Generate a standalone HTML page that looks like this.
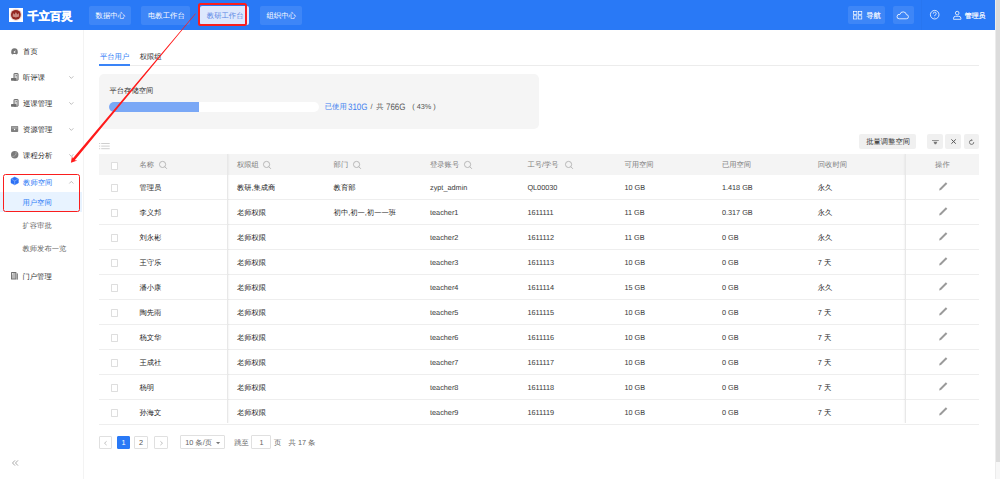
<!DOCTYPE html>
<html><head><meta charset="utf-8"><style>
*{box-sizing:border-box;margin:0;padding:0}
html,body{width:1000px;height:479px;overflow:hidden;background:#fff;font-family:"Liberation Sans",sans-serif;color:#333;text-rendering:geometricPrecision}
.a{position:absolute}
.t{position:absolute;white-space:nowrap;line-height:10px;font-size:7.3px}
.nb{position:absolute;top:5.6px;height:19.4px;background:rgba(255,255,255,0.1);border-radius:2px}
.btn{position:absolute;top:134.2px;height:15.2px;background:#f0f0f0;border-radius:2px}
.cb{position:absolute;width:7.3px;height:7.5px;border:0.9px solid #dedede;background:#fff;border-radius:0.8px}
.pg{position:absolute;top:435.8px;height:13.5px;border:0.8px solid #e0e0e0;border-radius:1px;background:#fff}
svg{position:absolute;overflow:visible}
</style></head><body>
<div class="a" style="left:0px;top:0px;width:995px;height:29.5px;background:#2979f6"></div>
<div class="a" style="left:920.5px;top:0px;width:0.8px;height:29.5px;background:rgba(0,0,0,0.025)"></div>
<div class="a" style="left:995px;top:0px;width:5px;height:479px;background:#f7f7f7"></div>
<div class="a" style="left:995.8px;top:0px;width:4.2px;height:462.4px;background:#dcdcdc"></div>
<div class="a" style="left:995px;top:0px;width:0.9px;height:479px;background:#ececec"></div>
<div class="a" style="left:9.1px;top:7.9px;width:14px;height:14px;background:#fff"></div>
<svg style="left:9.1px;top:7.9px" width="14" height="14" viewBox="0 0 14 14"><circle cx="6.9" cy="6.8" r="6.0" fill="#ecd3d0"/><circle cx="6.9" cy="6.8" r="4.9" fill="#922621"/><path d="M3.6 8.6 L4.0 5.0 L5.5 6.4 L6.9 3.9 L8.3 6.4 L9.8 5.0 L10.2 8.6 Q6.9 10.2 3.6 8.6 Z" fill="#c98a83"/></svg>
<div class="t" style="left:27.4px;top:12.00px;color:#fff;font-size:11.3px;font-weight:bold;-webkit-text-stroke:0.35px #fff">千立百灵</div>
<div class="nb" style="left:89px;width:42px"></div>
<div class="t" style="left:95.6px;top:11.00px;color:#fff;font-size:7.35px;">数据中心</div>
<div class="nb" style="left:141px;width:49px"></div>
<div class="t" style="left:148px;top:11.00px;color:#fff;font-size:7.35px;">电教工作台</div>
<div class="nb" style="left:200px;width:49.4px;background:#dde8fd"></div>
<div class="t" style="left:206.8px;top:11.00px;color:#5a86e4;font-size:7.35px;">教研工作台</div>
<div class="nb" style="left:260.2px;width:41.4px"></div>
<div class="t" style="left:266.5px;top:11.00px;color:#fff;font-size:7.35px;">组织中心</div>
<div class="a" style="left:198.3px;top:3.1px;width:48.5px;height:22.8px;border:2px solid #fa1e1e;border-radius:2.5px"></div>
<div class="nb" style="left:848px;top:6px;height:18px;width:37px"></div>
<svg style="left:852.8px;top:10.8px" width="9.2" height="8.4" viewBox="0 0 9.2 8.4"><g fill="none" stroke="#fff" stroke-width="0.7"><rect x="0.4" y="0.4" width="3.5" height="3.2"/><rect x="5.3" y="0.4" width="3.5" height="3.2"/><rect x="0.4" y="4.8" width="3.5" height="3.2"/><rect x="5.3" y="4.8" width="3.5" height="3.2"/></g></svg>
<div class="t" style="left:866.2px;top:10.60px;color:#fff;font-size:7.3px;-webkit-text-stroke:0.15px #fff">导航</div>
<div class="nb" style="left:893px;top:6px;height:18px;width:20.6px"></div>
<svg style="left:897.2px;top:11px" width="12" height="8.2" viewBox="0 0 12 8.2"><path d="M2.3 7.8 H9.4 A2.05 2.05 0 1 0 9.4 3.7 A3.3 3.3 0 0 0 2.9 3.5 A2.2 2.2 0 1 0 2.3 7.8 Z" fill="none" stroke="#fff" stroke-width="0.8"/></svg>
<svg style="left:929.8px;top:10.4px" width="9.4" height="9.4" viewBox="0 0 9.4 9.4"><circle cx="4.7" cy="4.7" r="4.3" fill="none" stroke="#fff" stroke-width="0.8"/><path d="M3.3 3.7 A1.45 1.45 0 1 1 5.2 5.0 Q4.7 5.3 4.7 6.0" fill="none" stroke="#fff" stroke-width="0.8"/><circle cx="4.7" cy="7.1" r="0.45" fill="#fff"/></svg>
<svg style="left:953px;top:11px" width="8.4" height="8.8" viewBox="0 0 8.4 8.8"><circle cx="4.2" cy="2.1" r="1.8" fill="none" stroke="#fff" stroke-width="0.8"/><path d="M0.5 8.3 V7.3 Q0.5 5.3 2.6 5.3 H5.8 Q7.9 5.3 7.9 7.3 V8.3 Z" fill="none" stroke="#fff" stroke-width="0.8"/></svg>
<div class="t" style="left:964.8px;top:11.70px;color:#fff;font-size:6.9px;-webkit-text-stroke:0.2px #fff">管理员</div>
<div class="a" style="left:82.8px;top:29.5px;width:0.8px;height:449.5px;background:#f3f3f3"></div>
<div class="a" style="left:0px;top:191.5px;width:82.3px;height:20.8px;background:#e8f3ff"></div>
<div class="t" style="left:23.1px;top:46.90px;color:#262626;font-size:7.3px;">首页</div>
<div class="t" style="left:23.1px;top:72.90px;color:#262626;font-size:7.3px;">听评课</div>
<svg style="left:69.3px;top:76.0px" width="4.7" height="2.8" viewBox="0 0 4.7 2.8"><path d="M0.3 0.3 L2.35 2.4 L4.4 0.3" fill="none" stroke="#a4a4a4" stroke-width="0.7"/></svg>
<div class="t" style="left:23.1px;top:99.00px;color:#262626;font-size:7.3px;">巡课管理</div>
<svg style="left:69.3px;top:102.1px" width="4.7" height="2.8" viewBox="0 0 4.7 2.8"><path d="M0.3 0.3 L2.35 2.4 L4.4 0.3" fill="none" stroke="#a4a4a4" stroke-width="0.7"/></svg>
<div class="t" style="left:23.1px;top:124.90px;color:#262626;font-size:7.3px;">资源管理</div>
<svg style="left:69.3px;top:128.0px" width="4.7" height="2.8" viewBox="0 0 4.7 2.8"><path d="M0.3 0.3 L2.35 2.4 L4.4 0.3" fill="none" stroke="#a4a4a4" stroke-width="0.7"/></svg>
<div class="t" style="left:23.1px;top:150.90px;color:#262626;font-size:7.3px;">课程分析</div>
<svg style="left:69.3px;top:154.0px" width="4.7" height="2.8" viewBox="0 0 4.7 2.8"><path d="M0.3 0.3 L2.35 2.4 L4.4 0.3" fill="none" stroke="#a4a4a4" stroke-width="0.7"/></svg>
<div class="t" style="left:23.1px;top:177.50px;color:#2979f6;font-size:7.3px;">教师空间</div>
<svg style="left:68.8px;top:180.6px" width="4.7" height="2.8" viewBox="0 0 4.7 2.8"><path d="M0.3 2.5 L2.35 0.4 L4.4 2.5" fill="none" stroke="#a4a4a4" stroke-width="0.7"/></svg>
<div class="t" style="left:22.5px;top:198.30px;color:#2979f6;font-size:7.3px;">用户空间</div>
<div class="t" style="left:22.5px;top:221.10px;color:#666;font-size:7.3px;">扩容审批</div>
<div class="t" style="left:22.5px;top:244.00px;color:#666;font-size:7.3px;">教师发布一览</div>
<div class="t" style="left:22.5px;top:271.90px;color:#262626;font-size:7.3px;">门户管理</div>
<div class="a" style="left:2.9px;top:173.8px;width:77.2px;height:38.7px;border:1.9px solid #fa1e1e;border-radius:2.5px"></div>
<svg style="left:10.9px;top:47.6px" width="7" height="6.6" viewBox="0 0 7 6.6"><path d="M0.15 4.3 Q0.1 1.2 1.9 0.5 Q3.5 0 5.1 0.5 Q6.9 1.2 6.85 4.3 Q6.8 6.4 5.6 6.4 Q4.9 6.4 4.5 6.0 H2.5 Q2.1 6.4 1.4 6.4 Q0.2 6.4 0.15 4.3 Z" fill="#777"/><circle cx="3.55" cy="3.9" r="0.85" fill="#fff"/><path d="M3.6 3.7 L4.8 2.0" stroke="#c8c8c8" stroke-width="0.5"/></svg>
<svg style="left:10.9px;top:73.0px" width="7.6" height="7.7" viewBox="0 0 7.6 7.7"><rect x="3.0" y="0.5" width="4.1" height="6.7" rx="0.3" fill="#d0d0d0" stroke="#707070" stroke-width="1"/><path d="M4.2 2.0 H6.0 V3.6 Z" fill="#8a8a8a"/><rect x="0" y="4.9" width="5.4" height="2.8" rx="0.6" fill="#6e6e6e"/></svg>
<svg style="left:10.9px;top:99.1px" width="7.6" height="7.7" viewBox="0 0 7.6 7.7"><rect x="3.0" y="0.5" width="4.1" height="6.7" rx="0.3" fill="#d0d0d0" stroke="#707070" stroke-width="1"/><path d="M4.2 2.0 H6.0 V3.6 Z" fill="#8a8a8a"/><rect x="0" y="4.9" width="5.4" height="2.8" rx="0.6" fill="#6e6e6e"/></svg>
<svg style="left:10.9px;top:126px" width="7.2" height="6" viewBox="0 0 7.2 6"><rect x="0" y="0" width="7.2" height="6" rx="0.8" fill="#808080"/><rect x="0.6" y="0.5" width="6" height="2.3" rx="0.4" fill="#a2a2a2"/><circle cx="3.6" cy="3.5" r="0.65" fill="#fff"/></svg>
<svg style="left:10.9px;top:151.2px" width="7.4" height="7.6" viewBox="0 0 7.4 7.6"><circle cx="3.7" cy="3.8" r="3.7" fill="#7a7a7a"/><path d="M5.0 0.9 Q5.8 4.8 1.4 5.6" fill="none" stroke="#b8b8b8" stroke-width="0.7"/></svg>
<svg style="left:10.9px;top:177.4px" width="7.4" height="7.8" viewBox="0 0 7.4 7.8"><path d="M3.7 0 L7.4 1.9 V5.9 L3.7 7.8 L0 5.9 V1.9 Z" fill="#2b70f5" stroke="#2b70f5" stroke-width="0.5" stroke-linejoin="round"/><path d="M0.6 2.2 L3.7 3.9 L6.8 2.2 M3.7 3.9 V7.4" fill="none" stroke="#a9c6fb" stroke-width="0.55"/></svg>
<svg style="left:10.9px;top:272.1px" width="7" height="7.6" viewBox="0 0 7 7.6"><rect x="0" y="0" width="5.4" height="7.6" rx="0.6" fill="#707070"/><rect x="5.6" y="1.4" width="1.4" height="6.2" fill="#8a8a8a"/><rect x="0.9" y="1.0" width="3.6" height="5.6" fill="#b9b9b9"/><circle cx="1.6" cy="1.8" r="0.6" fill="#fff"/></svg>
<svg style="left:12px;top:459.5px" width="6.6" height="6.2" viewBox="0 0 6.6 6.2"><path d="M3.0 0.4 L0.5 3.0 L3.0 5.6 M6.0 0.4 L3.5 3.0 L6.0 5.6" fill="none" stroke="#999" stroke-width="0.85"/></svg>
<div class="t" style="left:100px;top:51.90px;color:#2979f6;font-size:7.3px;">平台用户</div>
<div class="t" style="left:139.7px;top:51.90px;color:#333;font-size:7.3px;">权限组</div>
<div class="a" style="left:99px;top:65px;width:880px;height:0.8px;background:#ececec"></div>
<div class="a" style="left:99px;top:64.4px;width:31px;height:1.5px;background:#3a84f7"></div>
<div class="a" style="left:99px;top:73.75px;width:440px;height:55px;background:#f5f5f5;border-radius:5px"></div>
<div class="t" style="left:109.5px;top:86.20px;color:#333;font-size:7.3px;">平台存储空间</div>
<div class="a" style="left:109.2px;top:101.5px;width:209.5px;height:10.2px;background:#fff;border-radius:5px;overflow:hidden"><div style="width:90.3px;height:100%;background:#7aa8f6"></div></div>
<div class="t" style="left:324.8px;top:101.80px;color:#3d7ff0;font-size:7.3px;">已使用</div>
<div class="t" style="left:348.3px;top:101.50px;color:#3d7ff0;font-size:9.4px;transform:scaleX(0.85);transform-origin:0 50%">310G</div>
<div class="t" style="left:370.6px;top:101.80px;color:#555;font-size:7.3px;">/</div>
<div class="t" style="left:376.2px;top:101.80px;color:#555;font-size:7.3px;">共</div>
<div class="t" style="left:385.6px;top:101.50px;color:#555;font-size:9.4px;transform:scaleX(0.85);transform-origin:0 50%">766G</div>
<div class="t" style="left:412.2px;top:101.80px;color:#555;font-size:7.3px;">( 43% )</div>
<svg style="left:98.8px;top:143px" width="11" height="7" viewBox="0 0 11 7"><g fill="#cfcfcf"><rect x="0" y="0" width="1.2" height="1"/><rect x="2.2" y="0" width="8.5" height="1"/><rect x="0" y="2.6" width="1.2" height="1"/><rect x="2.2" y="2.6" width="8.5" height="1"/><rect x="0" y="5.2" width="1.2" height="1"/><rect x="2.2" y="5.2" width="8.5" height="1"/></g></svg>
<div class="btn" style="left:859.2px;width:57.2px"></div>
<div class="t" style="left:866.2px;top:136.70px;color:#333;font-size:7.3px;">批量调整空间</div>
<div class="btn" style="left:927.2px;width:15.6px"></div>
<div class="btn" style="left:945.4px;width:15.4px"></div>
<div class="btn" style="left:963.7px;width:15.2px"></div>
<svg style="left:931.7px;top:139.7px" width="6.8" height="4.4" viewBox="0 0 6.8 4.4"><rect x="0" y="0" width="6.8" height="0.9" fill="#888"/><path d="M1.4 1.8 H5.4 L4.1 4.3 H2.7 Z" fill="#777"/></svg>
<svg style="left:950.6px;top:139.1px" width="5.2" height="5.1" viewBox="0 0 5.2 5.1"><path d="M0.4 0.4 L4.8 4.7 M4.8 0.4 L0.4 4.7" stroke="#555" stroke-width="1.0"/></svg>
<svg style="left:968.8px;top:139.1px" width="5.4" height="5.6" viewBox="0 0 5.4 5.6"><path d="M4.75 3.1 A2.15 2.15 0 1 1 2.5 1.15" fill="none" stroke="#666" stroke-width="0.85"/><path d="M2.3 0.1 L3.8 1.15 L2.3 2.2 Z" fill="#666"/></svg>
<div class="a" style="left:99px;top:154px;width:880px;height:20.5px;background:#f4f4f4"></div>
<div class="cb" style="left:110.9px;top:162.3px"></div>
<div class="t" style="left:139.5px;top:160.00px;color:#7d7d7d;font-size:7.3px;">名称</div>
<div class="t" style="left:236.9px;top:160.00px;color:#7d7d7d;font-size:7.3px;">权限组</div>
<div class="t" style="left:333.6px;top:160.00px;color:#7d7d7d;font-size:7.3px;">部门</div>
<div class="t" style="left:430px;top:160.00px;color:#7d7d7d;font-size:7.3px;">登录账号</div>
<div class="t" style="left:527.4px;top:160.00px;color:#7d7d7d;font-size:7.3px;">工号/学号</div>
<div class="t" style="left:624.4px;top:160.00px;color:#7d7d7d;font-size:7.3px;">可用空间</div>
<div class="t" style="left:721.9px;top:160.00px;color:#7d7d7d;font-size:7.3px;">已用空间</div>
<div class="t" style="left:817.8px;top:160.00px;color:#7d7d7d;font-size:7.3px;">回收时间</div>
<div class="t" style="left:935.1px;top:160.00px;color:#7d7d7d;font-size:7.3px;">操作</div>
<svg style="left:159px;top:161.1px" width="8" height="8" viewBox="0 0 8 8"><circle cx="3.55" cy="3.45" r="3.1" fill="none" stroke="#a6a6a6" stroke-width="0.75"/><path d="M5.8 5.7 L7.9 7.8" stroke="#a6a6a6" stroke-width="0.8"/></svg>
<svg style="left:262.9px;top:161.1px" width="8" height="8" viewBox="0 0 8 8"><circle cx="3.55" cy="3.45" r="3.1" fill="none" stroke="#a6a6a6" stroke-width="0.75"/><path d="M5.8 5.7 L7.9 7.8" stroke="#a6a6a6" stroke-width="0.8"/></svg>
<svg style="left:353px;top:161.1px" width="8" height="8" viewBox="0 0 8 8"><circle cx="3.55" cy="3.45" r="3.1" fill="none" stroke="#a6a6a6" stroke-width="0.75"/><path d="M5.8 5.7 L7.9 7.8" stroke="#a6a6a6" stroke-width="0.8"/></svg>
<svg style="left:464.4px;top:161.1px" width="8" height="8" viewBox="0 0 8 8"><circle cx="3.55" cy="3.45" r="3.1" fill="none" stroke="#a6a6a6" stroke-width="0.75"/><path d="M5.8 5.7 L7.9 7.8" stroke="#a6a6a6" stroke-width="0.8"/></svg>
<svg style="left:564.6px;top:161.1px" width="8" height="8" viewBox="0 0 8 8"><circle cx="3.55" cy="3.45" r="3.1" fill="none" stroke="#a6a6a6" stroke-width="0.75"/><path d="M5.8 5.7 L7.9 7.8" stroke="#a6a6a6" stroke-width="0.8"/></svg>
<div class="a" style="left:99px;top:198.7px;width:880px;height:0.8px;background:#eeeeee"></div>
<div class="cb" style="left:110.9px;top:184.30px"></div>
<div class="t" style="left:139.5px;top:183.10px;color:#262626;font-size:7.3px;">管理员</div>
<div class="t" style="left:236.9px;top:183.10px;color:#262626;font-size:7.3px;">教研,集成商</div>
<div class="t" style="left:333.6px;top:183.10px;color:#262626;font-size:7.3px;">教育部</div>
<div class="t" style="left:430px;top:183.10px;color:#3a3a3a;font-size:7.3px;">zypt_admin</div>
<div class="t" style="left:527.4px;top:183.10px;color:#3a3a3a;font-size:7.3px;">QL00030</div>
<div class="t" style="left:624.4px;top:183.10px;color:#3a3a3a;font-size:7.3px;">10 GB</div>
<div class="t" style="left:721.9px;top:183.10px;color:#3a3a3a;font-size:7.3px;">1.418 GB</div>
<div class="t" style="left:817.8px;top:183.10px;color:#262626;font-size:7.3px;">永久</div>
<svg style="left:938.6px;top:181.80px" width="8.6" height="8.5" viewBox="0 0 8.6 8.5"><path d="M0.1 8.4 L0.6 6.6 L6.9 0.3 L8.3 1.7 L2.0 8.0 Z" fill="#9a9a9a"/></svg>
<div class="a" style="left:99px;top:223.7px;width:880px;height:0.8px;background:#eeeeee"></div>
<div class="cb" style="left:110.9px;top:209.30px"></div>
<div class="t" style="left:139.5px;top:208.10px;color:#262626;font-size:7.3px;">李义邦</div>
<div class="t" style="left:236.9px;top:208.10px;color:#262626;font-size:7.3px;">老师权限</div>
<div class="t" style="left:333.6px;top:208.10px;color:#262626;font-size:7.3px;">初中,初一,初一一班</div>
<div class="t" style="left:430px;top:208.10px;color:#3a3a3a;font-size:7.3px;">teacher1</div>
<div class="t" style="left:527.4px;top:208.10px;color:#3a3a3a;font-size:7.3px;">1611111</div>
<div class="t" style="left:624.4px;top:208.10px;color:#3a3a3a;font-size:7.3px;">11 GB</div>
<div class="t" style="left:721.9px;top:208.10px;color:#3a3a3a;font-size:7.3px;">0.317 GB</div>
<div class="t" style="left:817.8px;top:208.10px;color:#262626;font-size:7.3px;">永久</div>
<svg style="left:938.6px;top:206.80px" width="8.6" height="8.5" viewBox="0 0 8.6 8.5"><path d="M0.1 8.4 L0.6 6.6 L6.9 0.3 L8.3 1.7 L2.0 8.0 Z" fill="#9a9a9a"/></svg>
<div class="a" style="left:99px;top:248.7px;width:880px;height:0.8px;background:#eeeeee"></div>
<div class="cb" style="left:110.9px;top:234.30px"></div>
<div class="t" style="left:139.5px;top:233.10px;color:#262626;font-size:7.3px;">刘永彬</div>
<div class="t" style="left:236.9px;top:233.10px;color:#262626;font-size:7.3px;">老师权限</div>
<div class="t" style="left:430px;top:233.10px;color:#3a3a3a;font-size:7.3px;">teacher2</div>
<div class="t" style="left:527.4px;top:233.10px;color:#3a3a3a;font-size:7.3px;">1611112</div>
<div class="t" style="left:624.4px;top:233.10px;color:#3a3a3a;font-size:7.3px;">11 GB</div>
<div class="t" style="left:721.9px;top:233.10px;color:#3a3a3a;font-size:7.3px;">0 GB</div>
<div class="t" style="left:817.8px;top:233.10px;color:#262626;font-size:7.3px;">永久</div>
<svg style="left:938.6px;top:231.80px" width="8.6" height="8.5" viewBox="0 0 8.6 8.5"><path d="M0.1 8.4 L0.6 6.6 L6.9 0.3 L8.3 1.7 L2.0 8.0 Z" fill="#9a9a9a"/></svg>
<div class="a" style="left:99px;top:273.7px;width:880px;height:0.8px;background:#eeeeee"></div>
<div class="cb" style="left:110.9px;top:259.30px"></div>
<div class="t" style="left:139.5px;top:258.10px;color:#262626;font-size:7.3px;">王守乐</div>
<div class="t" style="left:236.9px;top:258.10px;color:#262626;font-size:7.3px;">老师权限</div>
<div class="t" style="left:430px;top:258.10px;color:#3a3a3a;font-size:7.3px;">teacher3</div>
<div class="t" style="left:527.4px;top:258.10px;color:#3a3a3a;font-size:7.3px;">1611113</div>
<div class="t" style="left:624.4px;top:258.10px;color:#3a3a3a;font-size:7.3px;">10 GB</div>
<div class="t" style="left:721.9px;top:258.10px;color:#3a3a3a;font-size:7.3px;">0 GB</div>
<div class="t" style="left:817.8px;top:258.10px;color:#262626;font-size:7.3px;">7 天</div>
<svg style="left:938.6px;top:256.80px" width="8.6" height="8.5" viewBox="0 0 8.6 8.5"><path d="M0.1 8.4 L0.6 6.6 L6.9 0.3 L8.3 1.7 L2.0 8.0 Z" fill="#9a9a9a"/></svg>
<div class="a" style="left:99px;top:298.7px;width:880px;height:0.8px;background:#eeeeee"></div>
<div class="cb" style="left:110.9px;top:284.30px"></div>
<div class="t" style="left:139.5px;top:283.10px;color:#262626;font-size:7.3px;">潘小康</div>
<div class="t" style="left:236.9px;top:283.10px;color:#262626;font-size:7.3px;">老师权限</div>
<div class="t" style="left:430px;top:283.10px;color:#3a3a3a;font-size:7.3px;">teacher4</div>
<div class="t" style="left:527.4px;top:283.10px;color:#3a3a3a;font-size:7.3px;">1611114</div>
<div class="t" style="left:624.4px;top:283.10px;color:#3a3a3a;font-size:7.3px;">15 GB</div>
<div class="t" style="left:721.9px;top:283.10px;color:#3a3a3a;font-size:7.3px;">0 GB</div>
<div class="t" style="left:817.8px;top:283.10px;color:#262626;font-size:7.3px;">永久</div>
<svg style="left:938.6px;top:281.80px" width="8.6" height="8.5" viewBox="0 0 8.6 8.5"><path d="M0.1 8.4 L0.6 6.6 L6.9 0.3 L8.3 1.7 L2.0 8.0 Z" fill="#9a9a9a"/></svg>
<div class="a" style="left:99px;top:323.7px;width:880px;height:0.8px;background:#eeeeee"></div>
<div class="cb" style="left:110.9px;top:309.30px"></div>
<div class="t" style="left:139.5px;top:308.10px;color:#262626;font-size:7.3px;">陶先雨</div>
<div class="t" style="left:236.9px;top:308.10px;color:#262626;font-size:7.3px;">老师权限</div>
<div class="t" style="left:430px;top:308.10px;color:#3a3a3a;font-size:7.3px;">teacher5</div>
<div class="t" style="left:527.4px;top:308.10px;color:#3a3a3a;font-size:7.3px;">1611115</div>
<div class="t" style="left:624.4px;top:308.10px;color:#3a3a3a;font-size:7.3px;">10 GB</div>
<div class="t" style="left:721.9px;top:308.10px;color:#3a3a3a;font-size:7.3px;">0 GB</div>
<div class="t" style="left:817.8px;top:308.10px;color:#262626;font-size:7.3px;">7 天</div>
<svg style="left:938.6px;top:306.80px" width="8.6" height="8.5" viewBox="0 0 8.6 8.5"><path d="M0.1 8.4 L0.6 6.6 L6.9 0.3 L8.3 1.7 L2.0 8.0 Z" fill="#9a9a9a"/></svg>
<div class="a" style="left:99px;top:348.7px;width:880px;height:0.8px;background:#eeeeee"></div>
<div class="cb" style="left:110.9px;top:334.30px"></div>
<div class="t" style="left:139.5px;top:333.10px;color:#262626;font-size:7.3px;">杨文华</div>
<div class="t" style="left:236.9px;top:333.10px;color:#262626;font-size:7.3px;">老师权限</div>
<div class="t" style="left:430px;top:333.10px;color:#3a3a3a;font-size:7.3px;">teacher6</div>
<div class="t" style="left:527.4px;top:333.10px;color:#3a3a3a;font-size:7.3px;">1611116</div>
<div class="t" style="left:624.4px;top:333.10px;color:#3a3a3a;font-size:7.3px;">10 GB</div>
<div class="t" style="left:721.9px;top:333.10px;color:#3a3a3a;font-size:7.3px;">0 GB</div>
<div class="t" style="left:817.8px;top:333.10px;color:#262626;font-size:7.3px;">7 天</div>
<svg style="left:938.6px;top:331.80px" width="8.6" height="8.5" viewBox="0 0 8.6 8.5"><path d="M0.1 8.4 L0.6 6.6 L6.9 0.3 L8.3 1.7 L2.0 8.0 Z" fill="#9a9a9a"/></svg>
<div class="a" style="left:99px;top:373.7px;width:880px;height:0.8px;background:#eeeeee"></div>
<div class="cb" style="left:110.9px;top:359.30px"></div>
<div class="t" style="left:139.5px;top:358.10px;color:#262626;font-size:7.3px;">王成社</div>
<div class="t" style="left:236.9px;top:358.10px;color:#262626;font-size:7.3px;">老师权限</div>
<div class="t" style="left:430px;top:358.10px;color:#3a3a3a;font-size:7.3px;">teacher7</div>
<div class="t" style="left:527.4px;top:358.10px;color:#3a3a3a;font-size:7.3px;">1611117</div>
<div class="t" style="left:624.4px;top:358.10px;color:#3a3a3a;font-size:7.3px;">10 GB</div>
<div class="t" style="left:721.9px;top:358.10px;color:#3a3a3a;font-size:7.3px;">0 GB</div>
<div class="t" style="left:817.8px;top:358.10px;color:#262626;font-size:7.3px;">7 天</div>
<svg style="left:938.6px;top:356.80px" width="8.6" height="8.5" viewBox="0 0 8.6 8.5"><path d="M0.1 8.4 L0.6 6.6 L6.9 0.3 L8.3 1.7 L2.0 8.0 Z" fill="#9a9a9a"/></svg>
<div class="a" style="left:99px;top:398.7px;width:880px;height:0.8px;background:#eeeeee"></div>
<div class="cb" style="left:110.9px;top:384.30px"></div>
<div class="t" style="left:139.5px;top:383.10px;color:#262626;font-size:7.3px;">杨明</div>
<div class="t" style="left:236.9px;top:383.10px;color:#262626;font-size:7.3px;">老师权限</div>
<div class="t" style="left:430px;top:383.10px;color:#3a3a3a;font-size:7.3px;">teacher8</div>
<div class="t" style="left:527.4px;top:383.10px;color:#3a3a3a;font-size:7.3px;">1611118</div>
<div class="t" style="left:624.4px;top:383.10px;color:#3a3a3a;font-size:7.3px;">10 GB</div>
<div class="t" style="left:721.9px;top:383.10px;color:#3a3a3a;font-size:7.3px;">0 GB</div>
<div class="t" style="left:817.8px;top:383.10px;color:#262626;font-size:7.3px;">7 天</div>
<svg style="left:938.6px;top:381.80px" width="8.6" height="8.5" viewBox="0 0 8.6 8.5"><path d="M0.1 8.4 L0.6 6.6 L6.9 0.3 L8.3 1.7 L2.0 8.0 Z" fill="#9a9a9a"/></svg>
<div class="a" style="left:99px;top:423.7px;width:880px;height:0.8px;background:#eeeeee"></div>
<div class="cb" style="left:110.9px;top:409.30px"></div>
<div class="t" style="left:139.5px;top:408.10px;color:#262626;font-size:7.3px;">孙海文</div>
<div class="t" style="left:236.9px;top:408.10px;color:#262626;font-size:7.3px;">老师权限</div>
<div class="t" style="left:430px;top:408.10px;color:#3a3a3a;font-size:7.3px;">teacher9</div>
<div class="t" style="left:527.4px;top:408.10px;color:#3a3a3a;font-size:7.3px;">1611119</div>
<div class="t" style="left:624.4px;top:408.10px;color:#3a3a3a;font-size:7.3px;">10 GB</div>
<div class="t" style="left:721.9px;top:408.10px;color:#3a3a3a;font-size:7.3px;">0 GB</div>
<div class="t" style="left:817.8px;top:408.10px;color:#262626;font-size:7.3px;">7 天</div>
<svg style="left:938.6px;top:406.80px" width="8.6" height="8.5" viewBox="0 0 8.6 8.5"><path d="M0.1 8.4 L0.6 6.6 L6.9 0.3 L8.3 1.7 L2.0 8.0 Z" fill="#9a9a9a"/></svg>
<div class="a" style="left:226.8px;top:154px;width:0.8px;height:268.5px;background:#e8e8e8;box-shadow:1px 0 1.5px rgba(0,0,0,0.05)"></div>
<div class="a" style="left:905px;top:154px;width:0.8px;height:268.5px;background:#e8e8e8;box-shadow:-1px 0 1.5px rgba(0,0,0,0.05)"></div>
<div class="pg" style="left:99px;width:13.4px"></div>
<svg style="left:104.3px;top:440.5px" width="3" height="4.4" viewBox="0 0 3 4.4"><path d="M2.6 0.3 L0.5 2.2 L2.6 4.1" fill="none" stroke="#a0a0a0" stroke-width="0.65"/></svg>
<div class="pg" style="left:116.8px;width:13.2px;background:#2979f6;border-color:#2979f6"></div>
<div class="t" style="left:121.5px;top:437.50px;color:#fff;font-size:7.3px;">1</div>
<div class="pg" style="left:134.2px;width:13.6px"></div>
<div class="t" style="left:139px;top:437.50px;color:#555;font-size:7.3px;">2</div>
<div class="pg" style="left:154.2px;width:13.6px"></div>
<svg style="left:159.6px;top:440.5px" width="3" height="4.4" viewBox="0 0 3 4.4"><path d="M0.4 0.3 L2.5 2.2 L0.4 4.1" fill="none" stroke="#a0a0a0" stroke-width="0.65"/></svg>
<div class="pg" style="left:180.2px;width:44.6px;top:435.2px;height:14.3px"></div>
<div class="t" style="left:185.2px;top:437.50px;color:#666;font-size:7.3px;">10 条/页</div>
<svg style="left:216.2px;top:441.7px" width="4.2" height="2.2" viewBox="0 0 4.2 2.2"><path d="M0 0 H4.2 L2.1 2.2 Z" fill="#777"/></svg>
<div class="t" style="left:234.2px;top:437.50px;color:#666;font-size:7.3px;">跳至</div>
<div class="pg" style="left:251.2px;width:20.1px;top:435.2px;height:14.3px"></div>
<div class="t" style="left:259.5px;top:437.50px;color:#666;font-size:7.3px;">1</div>
<div class="t" style="left:274px;top:437.50px;color:#666;font-size:7.3px;">页</div>
<div class="t" style="left:288.6px;top:437.50px;color:#666;font-size:7.3px;">共 17 条</div>
<svg style="left:0;top:0" width="1000" height="479" viewBox="0 0 1000 479"><polygon points="195.27,13.41 72.76,158.52 72.00,155.93 70.90,162.70 77.37,160.42 74.68,160.13 195.73,13.79" fill="#ff1a1a"/></svg>
</body></html>
